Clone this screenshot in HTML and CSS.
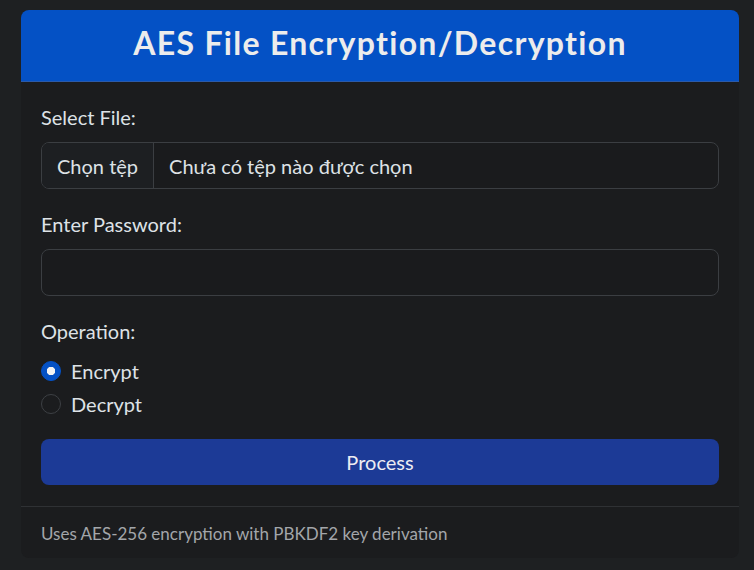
FILE: index.html
```html
<!DOCTYPE html>
<html lang="vi">
<head>
<meta charset="utf-8">
<title>AES File Encryption/Decryption</title>
<link rel="stylesheet" href="styles.css">
</head>
<body>
<div class="card">
  <div class="card-header">
    <h1 class="title">AES File Encryption/Decryption</h1>
  </div>
  <div class="card-body">
    <div class="group">
      <label class="form-label">Select File:</label>
      <div class="file-input">
        <span class="file-btn">Chọn tệp</span>
        <span class="file-name">Chưa có tệp nào được chọn</span>
      </div>
    </div>
    <div class="group">
      <label class="form-label" for="pw">Enter Password:</label>
      <input class="form-control" id="pw" type="password">
    </div>
    <div class="group">
      <label class="form-label">Operation:</label>
      <div class="form-check">
        <input class="radio" type="radio" name="op" id="enc" checked>
        <label for="enc">Encrypt</label>
      </div>
      <div class="form-check">
        <input class="radio" type="radio" name="op" id="dec">
        <label for="dec">Decrypt</label>
      </div>
    </div>
    <button class="btn" type="button">Process</button>
  </div>
  <div class="card-footer">Uses AES-256 encryption with PBKDF2 key derivation</div>
</div>
</body>
</html>
```
FILE: styles.css
```css
* { box-sizing: border-box; }
html, body { margin: 0; }
body {
  background: #1e2022;
  font-family: "Lato", "Liberation Sans", sans-serif;
  color: #dee2e6;
  padding: 10px 15px 0 21px;
}
.card {
  width: 718px;
  background: #1b1c1e;
  border-radius: 8px;
  overflow: hidden;
}
.card-header {
  background: #0451c5;
  height: 72px;
  border-bottom: 1px solid #2c5aa8;
  display: flex;
  align-items: center;
  justify-content: center;
  padding-bottom: 4px;
}
.title {
  margin: 0;
  font-size: 32px;
  font-weight: 700;
  letter-spacing: 1.3px;
  color: #ececec;
  line-height: 1.2;
}
.card-body {
  padding: 20px 20px 21px;
}
.group { margin-bottom: 20px; }
.form-label {
  display: block;
  font-size: 20px;
  line-height: 30px;
  margin-bottom: 10px;
  color: #dee2e6;
}
.file-input {
  display: flex;
  height: 47px;
  border: 1px solid #3b3e42;
  border-radius: 8px;
  overflow: hidden;
  font-size: 20px;
  background: #1a1b1d;
}
.file-btn {
  display: flex;
  align-items: center;
  padding: 0 15px;
  background: #1d1f22;
  border-right: 1px solid #3b3e42;
  color: #dee2e6;
}
.file-name {
  display: flex;
  align-items: center;
  padding: 0 16px 0 15px;
  color: #dee2e6;
}
.form-control {
  display: block;
  width: 100%;
  height: 47px;
  border: 1px solid #3b3e42;
  border-radius: 8px;
  background: #1a1b1d;
  color: #dee2e6;
  font-size: 20px;
  padding: 0 16px;
  outline: none;
}
.form-check {
  display: flex;
  align-items: center;
  height: 30px;
  margin-bottom: 3px;
  font-size: 20px;
}
.radio {
  appearance: none;
  -webkit-appearance: none;
  width: 20px;
  height: 20px;
  margin: 0 10px 0 0;
  border-radius: 50%;
  border: 1px solid #3d4044;
  background: transparent;
}
.radio:checked {
  background: #0451c5 radial-gradient(circle, #f4f4f4 0 4px, transparent 4.5px);
  border-color: #0451c5;
}
.btn {
  display: block;
  width: 100%;
  height: 46px;
  border: none;
  border-radius: 8px;
  background: #1c3a96;
  color: #ececf2;
  font-family: inherit;
  font-size: 20px;
}
.card-footer {
  border-top: 1px solid #2f3134;
  padding: 16px 20px 13px;
  font-size: 17px;
  line-height: 22px;
  color: #a3a6aa;
}
```
